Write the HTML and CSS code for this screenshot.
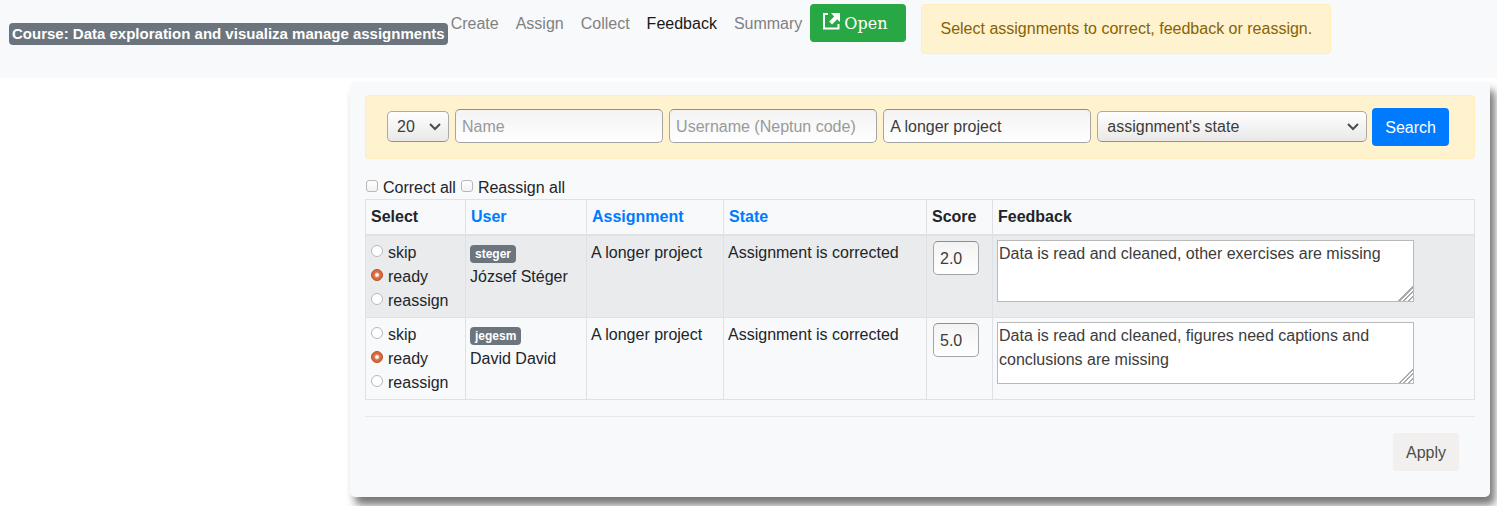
FILE: index.html
```html
<!DOCTYPE html>
<html lang="en">
<head>
<meta charset="utf-8">
<title>Manage assignments</title>
<link rel="stylesheet" href="styles.css">
</head>
<body>
<header class="navbar">
  <span class="badge course">Course: Data exploration and visualiza manage assignments</span>
  <nav class="nav">
    <a class="nav-link" href="#create">Create</a>
    <a class="nav-link" href="#assign">Assign</a>
    <a class="nav-link" href="#collect">Collect</a>
    <a class="nav-link active" href="#feedback">Feedback</a>
    <a class="nav-link" href="#summary">Summary</a>
  </nav>
  <button class="btn btn-open" type="button">
    <svg class="open-icon" viewBox="0 0 17 17" width="17" height="17" aria-hidden="true">
      <path d="M5 1H1v14.500h14.500V11" fill="none" stroke="#fff" stroke-width="2"/>
      <path d="M8 0h9v9l-2.800-2.800L9 11.400 6.200 8.600l5-5.200z" fill="#fff"/>
    </svg>
    Open
  </button>
  <div class="alert notice">Select assignments to correct, feedback or reassign.</div>
</header>

<main class="card">
  <form>
    <div class="alert filters">
      <select class="select page-size" aria-label="Rows per page"><option>20</option></select>
      <input class="field" type="text" placeholder="Name" aria-label="Name">
      <input class="field" type="text" placeholder="Username (Neptun code)" aria-label="Username">
      <input class="field" type="text" value="A longer project" aria-label="Assignment">
      <select class="select state" aria-label="State"><option>assignment's state</option></select>
      <button class="btn btn-search" type="button">Search</button>
    </div>
    <div class="bulk">
      <label class="choice"><input type="checkbox">Correct all</label>
      <label class="choice"><input type="checkbox">Reassign all</label>
    </div>
    <table class="table">
      <colgroup>
        <col class="col-select"><col class="col-user"><col class="col-assignment"><col class="col-state"><col class="col-score"><col>
      </colgroup>
      <thead>
        <tr>
          <th>Select</th>
          <th><a href="#user">User</a></th>
          <th><a href="#assignment">Assignment</a></th>
          <th><a href="#state">State</a></th>
          <th>Score</th>
          <th>Feedback</th>
        </tr>
      </thead>
      <tbody>
        <tr>
          <td>
            <label class="choice"><input type="radio" name="steger">skip</label>
            <label class="choice"><input type="radio" name="steger" checked>ready</label>
            <label class="choice"><input type="radio" name="steger">reassign</label>
          </td>
          <td><span class="badge user">steger</span><br>József Stéger</td>
          <td>A longer project</td>
          <td>Assignment is corrected</td>
          <td><input class="field score" type="text" value="2.0" aria-label="Score"></td>
          <td class="feedback-cell"><textarea class="feedback" aria-label="Feedback">Data is read and cleaned, other exercises are missing</textarea></td>
        </tr>
        <tr>
          <td>
            <label class="choice"><input type="radio" name="jegesm">skip</label>
            <label class="choice"><input type="radio" name="jegesm" checked>ready</label>
            <label class="choice"><input type="radio" name="jegesm">reassign</label>
          </td>
          <td><span class="badge user">jegesm</span><br>David David</td>
          <td>A longer project</td>
          <td>Assignment is corrected</td>
          <td><input class="field score" type="text" value="5.0" aria-label="Score"></td>
          <td class="feedback-cell"><textarea class="feedback" aria-label="Feedback">Data is read and cleaned, figures need captions and conclusions are missing</textarea></td>
        </tr>
      </tbody>
    </table>
    <div class="actions">
      <button class="btn btn-apply" type="button">Apply</button>
    </div>
  </form>
</main>
</body>
</html>
```
FILE: styles.css
```css
* { box-sizing: border-box; }
body {
  margin: 0;
  background: #fff;
  color: #212529;
  font: 16px/24px "Liberation Sans", Arial, sans-serif;
}
a { color: #007bff; text-decoration: none; }
button, input, select, textarea { margin: 0; font: inherit; }

.navbar {
  display: flex;
  align-items: flex-start;
  padding: 4px 8px 24px 9px;
  background: #f8f9fb;
}
.badge {
  display: inline-block;
  border-radius: 4px;
  background: #6c757d;
  color: #fff;
  font-weight: bold;
  white-space: nowrap;
}
.course { margin-top: 19px; padding: 3px; font-size: 15px; line-height: 16px; }
.nav { display: flex; gap: 1px; margin-left: -5px; }
.nav-link { padding: 8px; color: #808182; }
.nav-link.active { color: #191919; }

.btn {
  height: 38px;
  padding: 8px 13px 6px;
  border: 0;
  border-radius: 4px;
  color: #fff;
  white-space: nowrap;
}
.btn-open {
  display: flex;
  gap: 4px;
  padding-right: 19px;
  background: #28a745;
  font-family: "DejaVu Serif", serif;
}
.open-icon { margin-top: 1px; }
.alert {
  border: 1px solid #ffeeba;
  border-radius: 4px;
  background: #fff2cf;
  color: #856404;
}
.notice { margin-left: 15px; padding: 12px 18px; }

.card {
  margin: 4px 7px 9px 350px;
  padding: 13px 15px 26px;
  border-radius: 5px;
  background: #f8f9fb;
  box-shadow: 5px 8px 8px #777;
}
.filters { display: flex; align-items: flex-start; gap: 6px; padding: 12px 25px 12px 21px; }
.field {
  flex: 1 1 0;
  min-width: 0;
  height: 34px;
  margin-top: 1px;
  padding: 2px 6px 0;
  border: 1px solid #a5a5a5;
  border-top-color: #8e8e8e;
  border-radius: 5px;
  background: linear-gradient(#f3f3f3, #fff);
  color: #3c3c3c;
}
.field::placeholder { color: #999; opacity: 1; }
.select {
  height: 31px;
  margin-top: 3px;
  padding: 0 9px;
  border: 1px solid #aaa;
  border-bottom-color: #919191;
  border-radius: 5px;
  appearance: none;
  background:
    url("data:image/svg+xml,%3Csvg xmlns='http://www.w3.org/2000/svg' width='12' height='8'%3E%3Cpath d='M1 1l5 5 5-5' fill='none' stroke='%234c4c4c' stroke-width='2'/%3E%3C/svg%3E") no-repeat right 7px center,
    linear-gradient(#fefefe, #eae9e8);
  color: #3c3c3c;
}
.page-size { width: 62px; }
.state { width: 270px; }
.btn-search { margin-left: -1px; background: #007bff; }

.bulk { display: flex; gap: 4px; margin-top: 17px; line-height: 23px; }
.choice { display: flex; align-items: center; gap: 5px; }
.choice input {
  width: 12px;
  height: 12px;
  margin: 0 0 4px 1px;
  border: 1px solid #b8b8b8;
  appearance: none;
  background: #fff;
}
.choice input[type="checkbox"] { border-radius: 3px; background: linear-gradient(#fff, #f2f2f2); }
.choice input[type="radio"] { border-radius: 50%; }
.choice input[type="radio"]:checked {
  border-color: #b3512c;
  background: radial-gradient(circle, #fff 0 1px, #dd683d 3px);
}

.table { width: 100%; table-layout: fixed; border-collapse: collapse; }
.col-select { width: 100px; }
.col-user { width: 121px; }
.col-assignment { width: 137px; }
.col-state { width: 203px; }
.col-score { width: 66px; }
.table th, .table td {
  padding: 5px 4px 4px;
  border: 1px solid #dee2e6;
  text-align: left;
  vertical-align: top;
}
.table th { padding: 5px; border-bottom-width: 2px; }
.table .feedback-cell { padding-top: 4px; }
.table tbody tr:nth-child(odd) { background: #eaebec; }
.user { padding: 3px 5px; font-size: 12px; line-height: 12px; }
.score { display: block; width: 46px; margin: 0 0 0 2px; }
.feedback {
  display: block;
  width: 417px;
  max-width: 100%;
  height: 62px;
  padding: 1px;
  border: 1px solid #bababa;
  border-radius: 0;
  background: #fff;
  color: #3c3c3c;
  resize: both;
}
.feedback::-webkit-resizer {
  background: linear-gradient(135deg, #fff 0 50%, #aaa 50% 57%, #fff 57% 66%, #aaa 66% 73%, #fff 73% 82%, #aaa 82% 89%, #fff 89%);
}
.actions {
  display: flex;
  justify-content: flex-end;
  margin-top: 16px;
  padding: 16px 16px 0 0;
  border-top: 1px solid #e6e7e9;
}
.btn-apply { background: #f1f0ef; color: #4c4c4c; }
```
